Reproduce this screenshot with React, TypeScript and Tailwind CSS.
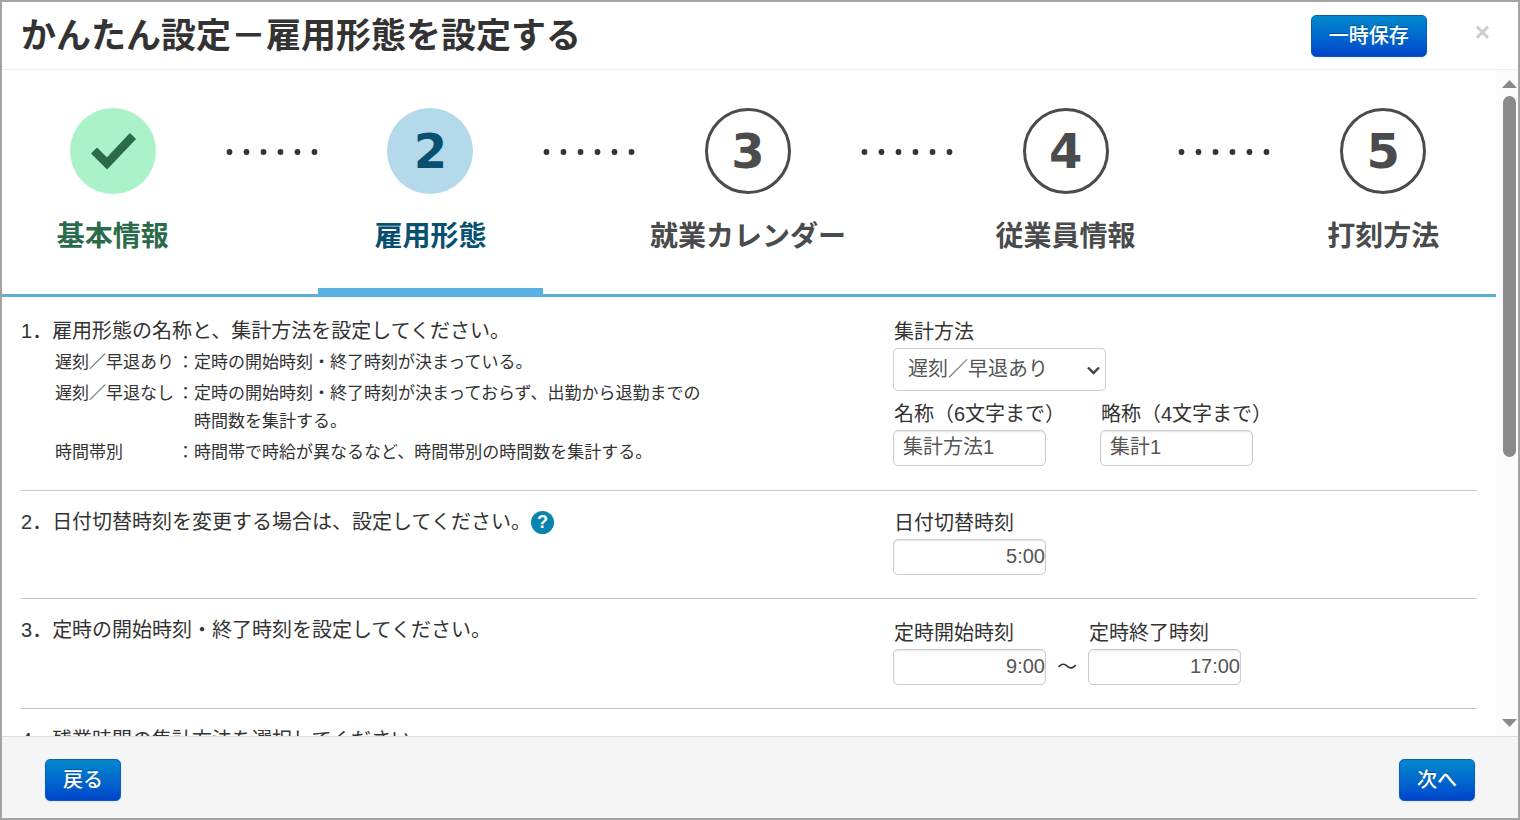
import { useState } from "react"
import type { ReactNode } from "react"

const steps = [
  { no: "1", label: "基本情報", state: "done" },
  { no: "2", label: "雇用形態", state: "current" },
  { no: "3", label: "就業カレンダー", state: "todo" },
  { no: "4", label: "従業員情報", state: "todo" },
  { no: "5", label: "打刻方法", state: "todo" },
]

const circleStyle: Record<string, string> = {
  done: "bg-[#abf2c8] text-[#2b6b4b]",
  current: "bg-[#b3d9eb] text-[#07506f]",
  todo: "border-[3px] border-[#4a4b4c] text-[#4a4b4c]",
}

const labelStyle: Record<string, string> = {
  done: "text-[#2b6b4b]",
  current: "text-[#07506f]",
  todo: "text-[#4a4b4c]",
}

const methods = [
  { name: "遅刻／早退あり", text: "定時の開始時刻・終了時刻が決まっている。" },
  { name: "遅刻／早退なし", text: "定時の開始時刻・終了時刻が決まっておらず、出勤から退勤までの時間数を集計する。" },
  { name: "時間帯別", text: "時間帯で時給が異なるなど、時間帯別の時間数を集計する。" },
]

function PrimaryButton({ children }: { children: ReactNode }) {
  return (
    <button className="h-[42px] px-[17px] rounded-[5px] border border-[#0a5cc0] bg-linear-to-b from-[#0088cc] to-[#0044cc] text-xl leading-none font-medium text-white cursor-pointer [text-shadow:0_-1px_0_rgba(0,0,0,0.25)] shadow-[0_1px_2px_rgba(0,0,0,0.08)]">
      {children}
    </button>
  )
}

function Dots() {
  return (
    <li aria-hidden="true" className="flex-[2] flex justify-center pt-[79px]">
      <svg width="92" height="6" viewBox="0 0 92 6" fill="#333">
        {[3.5, 20.5, 37.5, 54.5, 71.5, 88.5].map((x) => (
          <circle key={x} cx={x} cy="3" r="2.9" />
        ))}
      </svg>
    </li>
  )
}

function Steps() {
  return (
    <ol className="-ml-0.5 h-[227px] flex border-b-[3px] border-[#5aafdc]">
      {steps.map((s, i) => (
        <Step key={s.no} step={s} last={i === steps.length - 1} />
      ))}
    </ol>
  )
}

function Step({ step, last }: { step: (typeof steps)[number]; last: boolean }) {
  return (
    <>
      <li className={`flex-[5] min-w-0 -mb-[3px] pt-[38px] flex flex-col items-center ${step.state === "current" ? "border-b-[9px] border-[#57b1e2]" : ""}`}>
        <div className={`size-[86px] shrink-0 rounded-full flex items-center justify-center font-['DejaVu_Sans',sans-serif] font-bold text-5xl leading-none ${circleStyle[step.state]}`}>
          {step.state === "done" ? (
            <svg width="48" height="40" viewBox="0 0 48 40" fill="none" stroke="currentColor" strokeWidth="8.5">
              <path d="M5 19.5 L18 32.5 L44 5" />
            </svg>
          ) : (
            step.no
          )}
        </div>
        <p className={`mt-[23px] text-[28px] leading-10 font-bold whitespace-nowrap ${labelStyle[step.state]}`}>{step.label}</p>
      </li>
      {!last && <Dots />}
    </>
  )
}

function Section({ no, title, help, first, note, children }: { no: string; title: string; help?: boolean; first?: boolean; note?: ReactNode; children?: ReactNode }) {
  return (
    <section className={`ml-[19px] mr-[19px] pb-[23px] flex border-b border-[#c8c8c8] ${first ? "pt-5" : "pt-[17px]"}`}>
      <div className="flex-1 min-w-0">
        <h2 className="flex items-center text-xl leading-7">
          {no}．{title}
          {help && (
            <button aria-label="ヘルプ" className="size-[23px] rounded-full bg-[#0685ad] flex items-center justify-center text-lg leading-none font-bold text-white cursor-pointer">
              ?
            </button>
          )}
        </h2>
        {note}
      </div>
      <div className="w-[584px] shrink-0">{children}</div>
    </section>
  )
}

function Field({ id, label, value, time }: { id: string; label: string; value: string; time?: boolean }) {
  const [text, setText] = useState(value)
  return (
    <div className="w-[153px]">
      <label htmlFor={id} className="block pl-px text-xl leading-[31px] whitespace-nowrap">{label}</label>
      <input
        id={id}
        type="text"
        value={text}
        onChange={(e) => setText(e.target.value)}
        className={`block w-full h-9 rounded-[5px] border border-[#ccc] bg-white text-xl text-[#555] shadow-[inset_0_1px_2px_rgba(0,0,0,0.1)] ${time ? "text-right pb-0.5" : "pl-[9px] pb-1.5"}`}
      />
    </div>
  )
}

function Scrollbar() {
  return (
    <div aria-hidden="true" className="w-[22px] shrink-0 bg-[#fcfcfc] flex flex-col items-center pl-1 pt-2.5 pb-[9px]">
      <svg width="15" height="8" viewBox="0 0 15 8" fill="#8a8a8a"><path d="M7.5 0 L15 8 H0 Z" /></svg>
      <div className="flex-1 w-[13px] pt-2">
        <div className="h-[58%] rounded-full bg-[#8a8a8a]"></div>
      </div>
      <svg width="15" height="8" viewBox="0 0 15 8" fill="#8a8a8a"><path d="M0 0 H15 L7.5 8 Z" /></svg>
    </div>
  )
}

export default function App() {
  const [method, setMethod] = useState("遅刻／早退あり")

  return (
    <div className="h-screen flex flex-col border-2 border-[#a3a3a3] bg-white text-[#333] font-['Liberation_Sans','Noto_Sans_CJK_JP',sans-serif]">
      <header className="h-[68px] shrink-0 flex items-start border-b border-[#eee] pl-[19px] pr-7">
        <h1 className="flex-1 pt-2 text-[35px] leading-[52px] font-bold">かんたん設定－雇用形態を設定する</h1>
        <div className="pt-[13px]">
          <PrimaryButton>一時保存</PrimaryButton>
        </div>
        <button aria-label="閉じる" className="ml-12 mt-4 text-[26px] leading-7 font-bold text-[#ccc] cursor-pointer">×</button>
      </header>

      <div className="flex-1 min-h-0 flex">
        <main className="flex-1 min-w-0 overflow-y-auto [scrollbar-width:none]">
          <Steps />

          <Section
            first
            no="1"
            title="雇用形態の名称と、集計方法を設定してください。"
            note={
              <dl className="pt-1 pl-[34px] space-y-[3px] text-[17px] leading-7">
                {methods.map((m) => (
                  <div key={m.name} className="flex">
                    <dt className="w-[139px] shrink-0 flex justify-between">
                      {m.name}
                      <span>：</span>
                    </dt>
                    <dd className="max-w-[520px]">{m.text}</dd>
                  </div>
                ))}
              </dl>
            }
          >
            <label htmlFor="method" className="block pl-px text-xl leading-[31px]">集計方法</label>
            <div className="relative w-[213px]">
              <select
                id="method"
                value={method}
                onChange={(e) => setMethod(e.target.value)}
                className="block w-full h-[43px] pl-[14px] pb-0.5 appearance-none rounded-[5px] border border-[#ccc] bg-white text-xl text-[#555]"
              >
                {methods.map((m) => (
                  <option key={m.name}>{m.name}</option>
                ))}
              </select>
              <svg className="absolute right-1.5 top-[18px] pointer-events-none" width="13" height="9" viewBox="0 0 13 9" fill="none" stroke="#444" strokeWidth="2.4">
                <path d="M1 1.5 L6.5 7 L12 1.5" />
              </svg>
            </div>
            <div className="mt-2 flex gap-[54px]">
              <Field id="name" label="名称（6文字まで）" value="集計方法1" />
              <Field id="short-name" label="略称（4文字まで）" value="集計1" />
            </div>
          </Section>

          <Section no="2" title="日付切替時刻を変更する場合は、設定してください。" help>
            <Field id="switch-time" label="日付切替時刻" value="5:00" time />
          </Section>

          <Section no="3" title="定時の開始時刻・終了時刻を設定してください。">
            <div className="pt-0.5 flex items-end">
              <Field id="start-time" label="定時開始時刻" value="9:00" time />
              <span className="w-[42px] text-center text-xl leading-9">～</span>
              <Field id="end-time" label="定時終了時刻" value="17:00" time />
            </div>
          </Section>

          <Section no="4" title="残業時間の集計方法を選択してください。" />
        </main>
        <Scrollbar />
      </div>

      <footer className="h-[82px] shrink-0 flex items-start justify-between border-t border-[#ddd] bg-[#f5f5f5] px-[43px] pt-[22px]">
        <PrimaryButton>戻る</PrimaryButton>
        <PrimaryButton>次へ</PrimaryButton>
      </footer>
    </div>
  )
}
